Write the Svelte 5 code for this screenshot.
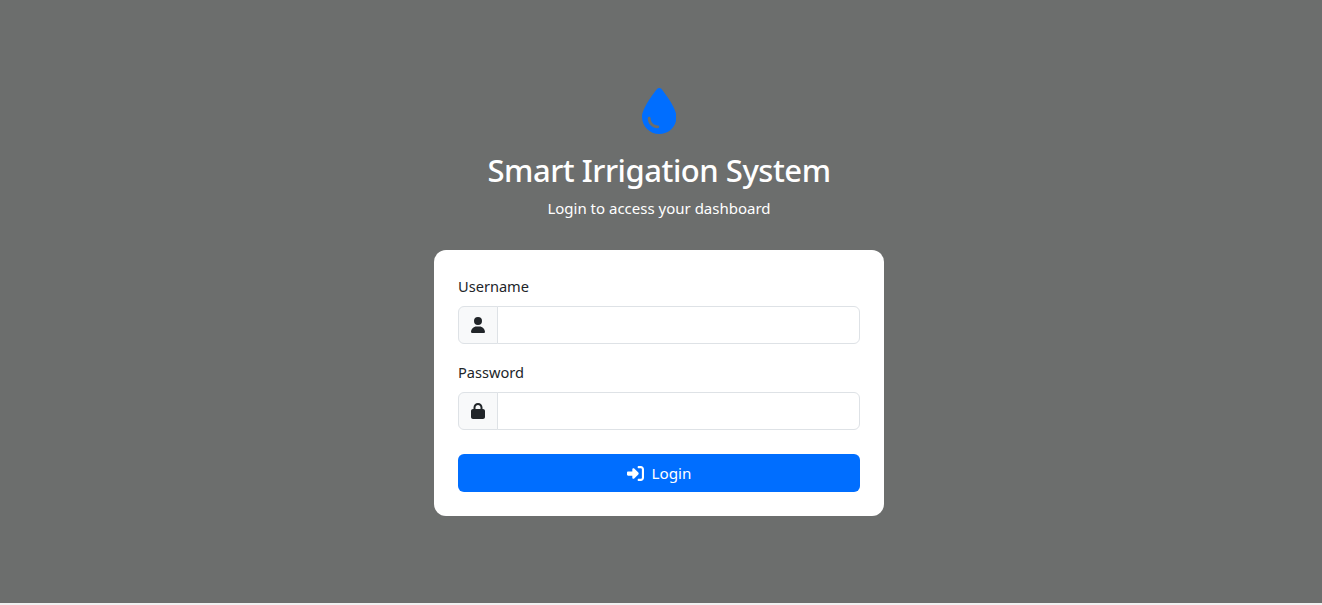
<script>
  let username = $state('');
  let password = $state('');
</script>

<main class="page">
  <header class="brand">
    <svg class="drop" viewBox="0 0 384 512" aria-hidden="true"><path d="M192 512C86 512 0 426 0 320C0 228.8 130.2 57.7 166.6 11.7C172.6 4.2 181.5 0 191.1 0h1.8c9.6 0 18.5 4.2 24.5 11.7C253.8 57.7 384 228.8 384 320c0 106-86 192-192 192zM96 336c0-8.8-7.2-16-16-16s-16 7.2-16 16c0 61.9 50.1 112 112 112c8.8 0 16-7.2 16-16s-7.2-16-16-16c-44.2 0-80-35.8-80-80z"/></svg>
    <h1>Smart Irrigation System</h1>
    <p>Login to access your dashboard</p>
  </header>

  <form class="card" onsubmit={(e) => e.preventDefault()}>
    <label for="username">Username</label>
    <div class="group">
      <span class="addon"><svg viewBox="0 0 448 512" class="ico" aria-hidden="true"><path d="M224 256A128 128 0 1 0 224 0a128 128 0 1 0 0 256zm-45.7 48C79.8 304 0 383.8 0 482.3C0 498.7 13.3 512 29.7 512H418.3c16.4 0 29.7-13.3 29.7-29.7C448 383.8 368.2 304 269.7 304H178.3z"/></svg></span>
      <input id="username" type="text" bind:value={username} />
    </div>
    <label for="password">Password</label>
    <div class="group">
      <span class="addon"><svg viewBox="0 0 448 512" class="ico" aria-hidden="true"><path d="M144 144v48H304V144c0-44.2-35.8-80-80-80s-80 35.8-80 80zM80 192V144C80 64.5 144.5 0 224 0s144 64.5 144 144v48h16c35.3 0 64 28.7 64 64V448c0 35.3-28.7 64-64 64H64c-35.3 0-64-28.7-64-64V256c0-35.3 28.7-64 64-64H80z"/></svg></span>
      <input id="password" type="password" bind:value={password} />
    </div>
    <button type="submit">
      <svg viewBox="0 0 512 512" class="login-ico" aria-hidden="true"><path d="M217.9 105.9L340.7 228.7c7.2 7.2 11.3 17.1 11.3 27.3s-4.1 20.1-11.3 27.3L217.9 406.1c-6.4 6.4-15 9.9-24 9.9c-18.7 0-33.9-15.2-33.9-33.9l0-62.1L32 320c-17.7 0-32-14.3-32-32l0-64c0-17.7 14.3-32 32-32l128 0 0-62.1c0-18.7 15.2-33.9 33.9-33.9c9 0 17.6 3.6 24 9.9zM352 416l64 0c17.7 0 32-14.3 32-32l0-256c0-17.7-14.3-32-32-32l-64 0c-17.7 0-32-14.3-32-32s14.3-32 32-32l64 0c53 0 96 43 96 96l0 256c0 53-43 96-96 96l-64 0c-17.7 0-32-14.3-32-32s14.3-32 32-32z"/></svg>
      Login
    </button>
  </form>
</main>

<style>
  :global(body) {
    margin: 0;
    background: #f1f1f1;
    font-family: "Noto Sans", "Open Sans", sans-serif;
  }
  .page {
    height: 603px;
    box-sizing: border-box;
    background: #6c6e6d;
    display: flex;
    flex-direction: column;
    align-items: center;
    padding-top: 88px;
    padding-right: 4px;
  }
  .brand {
    display: flex;
    flex-direction: column;
    align-items: center;
    color: #fff;
  }
  .drop { width: 34.5px; height: 46px; fill: #006eff; display: block; }
  h1 {
    margin: 17px 0 7px;
    font-size: 31px;
    line-height: 38px;
    font-weight: 500;
    letter-spacing: -0.47px;
  }
  .brand p {
    margin: 0;
    font-size: 15px;
    line-height: 24px;
  }
  .card {
    width: 450px;
    box-sizing: border-box;
    margin-top: 30px;
    padding: 24px;
    background: #fff;
    border-radius: 12px;
    display: flex;
    flex-direction: column;
  }
  label {
    color: #212529;
    font-size: 14.6px;
    line-height: 24px;
    margin-bottom: 8px;
  }
  .group {
    display: flex;
    height: 38px;
    margin-bottom: 16px;
  }
  .addon {
    width: 40px;
    box-sizing: border-box;
    background: #f8f9fa;
    border: 1px solid #dee2e6;
    border-radius: 6px 0 0 6px;
    display: flex;
    align-items: center;
    justify-content: center;
  }
  .ico { width: 14px; height: 16px; fill: #212529; }
  input {
    flex: 1;
    min-width: 0;
    margin-left: -1px;
    padding: 6px 12px;
    border: 1px solid #dee2e6;
    border-radius: 0 6px 6px 0;
    background: #fff;
    font: inherit;
    outline: none;
  }
  button {
    height: 38px;
    margin-top: 8px;
    border: none;
    border-radius: 6px;
    background: #006eff;
    color: #fff;
    font: inherit;
    font-size: 15.2px;
    display: flex;
    align-items: center;
    justify-content: center;
    gap: 8px;
  }
  .login-ico { width: 17px; height: 17px; fill: #fff; }
</style>
